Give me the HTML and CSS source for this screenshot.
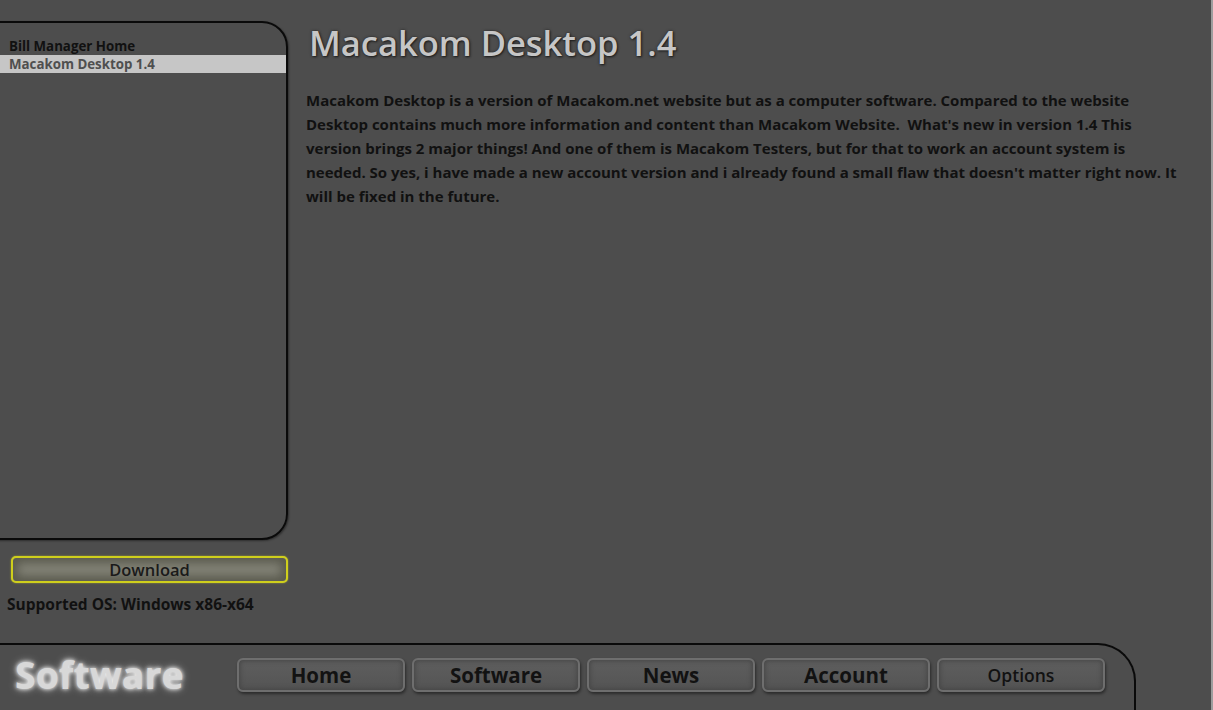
FILE: index.html
```html
<!DOCTYPE html>
<html>
<head>
<meta charset="utf-8">
<link rel="stylesheet" href="styles.css">
</head>
<body>
<div class="window">
  <div class="main">
    <aside class="sidebar">
      <div class="panel">
        <ul class="list">
          <li class="item">Bill Manager Home</li>
          <li class="item selected">Macakom Desktop 1.4</li>
        </ul>
      </div>
      <button class="download">Download</button>
      <div class="os">Supported OS: Windows x86-x64</div>
    </aside>
    <section class="content">
      <h1 class="title">Macakom Desktop 1.4</h1>
      <p class="desc">Macakom Desktop is a version of Macakom.net website but as a computer software. Compared to the website Desktop contains much more information and content than Macakom Website.&nbsp; What's new in version 1.4 This version brings 2 major things! And one of them is Macakom Testers, but for that to work an account system is needed. So yes, i have made a new account version and i already found a small flaw that doesn't matter right now. It will be fixed in the future.</p>
    </section>
  </div>
  <footer class="bar">
    <div class="logo">Software</div>
    <nav class="nav">
      <button class="navbtn">Home</button>
      <button class="navbtn">Software</button>
      <button class="navbtn">News</button>
      <button class="navbtn">Account</button>
      <button class="navbtn small">Options</button>
    </nav>
  </footer>
</div>
</body>
</html>
```
FILE: styles.css
```css
html, body {
  margin: 0;
  padding: 0;
  height: 100%;
  overflow: hidden;
}
body {
  background: #4d4d4d;
  font-family: "Open Sans", "Noto Sans", sans-serif;
  color: #111;
}
.window {
  height: 710px;
  display: flex;
  flex-direction: column;
  border-right: 2px solid #9e9e9e;
  width: 1211px;
  box-sizing: content-box;
}
.main {
  display: flex;
  height: 643px;
}
.sidebar {
  width: 288px;
  flex: none;
  padding-top: 21px;
}
.panel {
  margin-left: -4px;
  width: 288px;
  height: 515px;
  border: 2px solid #0a0a0a;
  border-radius: 0 26px 26px 0;
  box-sizing: content-box;
  box-shadow: 1px 1px 2px rgba(0,0,0,0.4);
}
.list {
  list-style: none;
  margin: 0;
  padding: 14px 0 0 2px;
  width: 286px;
}
.item {
  height: 18px;
  line-height: 18px;
  font-size: 13.3px;
  font-weight: 700;
  padding-left: 9px;
  color: #111;
}
.item.selected {
  background: #c6c6c6;
  color: #4f4f4f;
}
.download {
  display: block;
  margin: 16px 0 0 11px;
  width: 277px;
  height: 27px;
  border: 2px solid #cfcf1c;
  border-radius: 5px;
  background: #828276;
  box-shadow: inset 0 0 10px 5px #5a5a4e, 0 0 2px rgba(220,220,40,0.6);
  font-family: inherit;
  font-size: 16.5px;
  font-weight: 600;
  color: #1a1a1a;
  padding: 0;
  line-height: 22px;
}
.os {
  margin: 10px 0 0 7px;
  font-size: 15.5px;
  font-weight: 700;
  color: #111;
}
.content {
  flex: 1;
  padding: 0 20px 0 18px;
}
.title {
  margin: 20px 0 0 3px;
  font-size: 34.5px;
  font-weight: 600;
  color: #c6c6c6;
  line-height: 46px;
  text-shadow: 1px 1px 2px #1e1e1e, 0 0 3px #2a2a2a;
}
.desc {
  margin: 22px 0 0 0;
  font-size: 15px;
  font-weight: 700;
  line-height: 24px;
  color: #111;
  width: 880px;
}
.bar {
  flex: 1;
  width: 1134px;
  border-top: 2px solid #0a0a0a;
  border-right: 2px solid #0a0a0a;
  border-top-right-radius: 38px;
  display: flex;
  align-items: flex-start;
  padding-top: 12px;
}
.logo {
  margin-left: 15px;
  width: 222px;
  font-size: 37.5px;
  font-weight: 700;
  line-height: 36px;
  color: #d8d8d8;
  text-shadow: 0 0 4px #ffffff, 0 0 8px rgba(255,255,255,0.6);
}
.nav {
  display: flex;
  gap: 7px;
  margin-top: 1px;
}
.navbtn {
  width: 168px;
  height: 34px;
  border: 2px solid #6e6e6e;
  border-radius: 6px;
  background: linear-gradient(#5e5e5e, #545454);
  box-shadow: inset 0 0 5px 1px #454545, 1px 2px 3px rgba(0,0,0,0.45);
  font-family: inherit;
  font-size: 20.5px;
  font-weight: 700;
  color: #121212;
  padding: 0;
  line-height: 29px;
}
.navbtn.small {
  font-size: 17.5px;
  font-weight: 600;
}
```
